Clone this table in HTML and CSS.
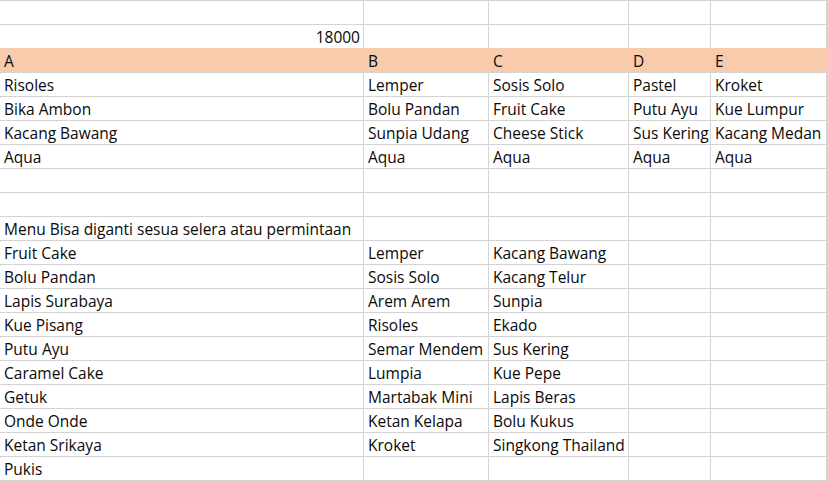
FILE: index.html
```html
<!DOCTYPE html>
<html>
<head>
<meta charset="utf-8">
<link rel="stylesheet" href="styles.css">
</head>
<body>
<div class="sheet">
  <div class="row"><div class="c"></div><div class="c"></div><div class="c"></div><div class="c"></div><div class="c"></div></div>
  <div class="row"><div class="c num">18000</div><div class="c"></div><div class="c"></div><div class="c"></div><div class="c"></div></div>
  <div class="row head"><div class="c">A</div><div class="c">B</div><div class="c">C</div><div class="c">D</div><div class="c">E</div></div>
  <div class="row"><div class="c">Risoles</div><div class="c">Lemper</div><div class="c">Sosis Solo</div><div class="c">Pastel</div><div class="c">Kroket</div></div>
  <div class="row"><div class="c">Bika Ambon</div><div class="c">Bolu Pandan</div><div class="c">Fruit Cake</div><div class="c">Putu Ayu</div><div class="c">Kue Lumpur</div></div>
  <div class="row"><div class="c">Kacang Bawang</div><div class="c">Sunpia Udang</div><div class="c">Cheese Stick</div><div class="c">Sus Kering</div><div class="c">Kacang Medan</div></div>
  <div class="row"><div class="c">Aqua</div><div class="c">Aqua</div><div class="c">Aqua</div><div class="c">Aqua</div><div class="c">Aqua</div></div>
  <div class="row"><div class="c"></div><div class="c"></div><div class="c"></div><div class="c"></div><div class="c"></div></div>
  <div class="row"><div class="c"></div><div class="c"></div><div class="c"></div><div class="c"></div><div class="c"></div></div>
  <div class="row"><div class="c">Menu Bisa diganti sesua selera atau permintaan</div><div class="c"></div><div class="c"></div><div class="c"></div><div class="c"></div></div>
  <div class="row"><div class="c">Fruit Cake</div><div class="c">Lemper</div><div class="c">Kacang Bawang</div><div class="c"></div><div class="c"></div></div>
  <div class="row"><div class="c">Bolu Pandan</div><div class="c">Sosis Solo</div><div class="c">Kacang Telur</div><div class="c"></div><div class="c"></div></div>
  <div class="row"><div class="c">Lapis Surabaya</div><div class="c">Arem Arem</div><div class="c">Sunpia</div><div class="c"></div><div class="c"></div></div>
  <div class="row"><div class="c">Kue Pisang</div><div class="c">Risoles</div><div class="c">Ekado</div><div class="c"></div><div class="c"></div></div>
  <div class="row"><div class="c">Putu Ayu</div><div class="c">Semar Mendem</div><div class="c">Sus Kering</div><div class="c"></div><div class="c"></div></div>
  <div class="row"><div class="c">Caramel Cake</div><div class="c">Lumpia</div><div class="c">Kue Pepe</div><div class="c"></div><div class="c"></div></div>
  <div class="row"><div class="c">Getuk</div><div class="c">Martabak Mini</div><div class="c">Lapis Beras</div><div class="c"></div><div class="c"></div></div>
  <div class="row"><div class="c">Onde Onde</div><div class="c">Ketan Kelapa</div><div class="c">Bolu Kukus</div><div class="c"></div><div class="c"></div></div>
  <div class="row"><div class="c">Ketan Srikaya</div><div class="c">Kroket</div><div class="c">Singkong Thailand</div><div class="c"></div><div class="c"></div></div>
  <div class="row"><div class="c">Pukis</div><div class="c"></div><div class="c"></div><div class="c"></div><div class="c"></div></div>
</div>
</body>
</html>
```
FILE: styles.css
```css
html, body {
  margin: 0;
  padding: 0;
  background: #fff;
}
.sheet {
  width: 827px;
  font-family: "Open Sans", "Liberation Sans", sans-serif;
  font-size: 15.5px;
  color: #0a0a0a;
  border-bottom: 1px solid #d4d4d4;
}
.row {
  display: grid;
  grid-template-columns: 364px 125px 140px 82px 116px;
  height: 24px;
  box-sizing: border-box;
  border-top: 1px solid #d4d4d4;
}
.c {
  box-sizing: border-box;
  border-right: 1px solid #d4d4d4;
  padding: 0 0 0 4px;
  display: flex;
  align-items: flex-end;
  padding-bottom: 1px;
  white-space: nowrap;
  overflow: visible;
  line-height: 20px;
}
.num {
  justify-content: flex-end;
  padding-right: 3px;
}
.head {
  background: #f8cbad;
  border-top-color: #f8cbad;
}
.head .c {
  border-right-color: #f8cbad;
}
```
